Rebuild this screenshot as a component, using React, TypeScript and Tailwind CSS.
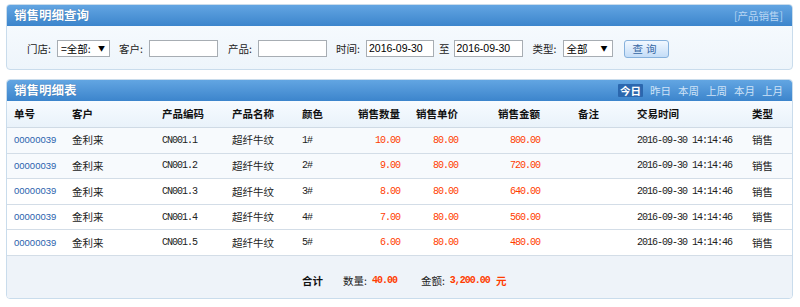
import React from "react";

const cn = '"Noto Sans CJK SC", "Liberation Sans", sans-serif';
const mono = '"Liberation Mono", "Noto Sans CJK SC", monospace';

const rows = [
  { code: "CN001.1", color: "1#", qty: "10.00", amount: "800.00" },
  { code: "CN001.2", color: "2#", qty: "9.00", amount: "720.00" },
  { code: "CN001.3", color: "3#", qty: "8.00", amount: "640.00" },
  { code: "CN001.4", color: "4#", qty: "7.00", amount: "560.00" },
  { code: "CN001.5", color: "5#", qty: "6.00", amount: "480.00" },
];

const cols = "grid grid-cols-[58px_90px_70px_70px_50px_62px_58px_82px_83px_115px_1fr]";
const num = "text-[10px] tracking-[-1px]";

function PanelHeader({ title, children }: { title: string; children?: React.ReactNode }) {
  return (
    <div className="flex h-[21px] items-center justify-between rounded-t-[3px] bg-gradient-to-b from-[#62a5e2] to-[#3c85cc] pl-[7px] pr-[9px]">
      <span className="text-[12.5px] font-bold leading-none text-white [text-shadow:0_0_1px_#2a5f99]" style={{ fontFamily: cn }}>
        {title}
      </span>
      {children}
    </div>
  );
}

function Field({ label, children }: { label: string; children: React.ReactNode }) {
  return (
    <div className="flex items-center">
      <span className="w-[30px] text-[10.5px] text-[#222]">{label}:</span>
      {children}
    </div>
  );
}

function TextBox({ w, value }: { w: string; value?: string }) {
  return (
    <div className={`${w} flex h-[17px] items-center border border-[#a7adb3] bg-white pl-[2px] text-[10.5px] text-black`} style={{ fontFamily: '"Liberation Sans", sans-serif' }}>
      {value}
    </div>
  );
}

function SelectBox({ w, value }: { w: string; value: string }) {
  return (
    <div className={`${w} flex h-[17px] items-center justify-between border border-[#a7adb3] bg-white pl-[3px] pr-[4px] text-[10.5px] text-black`}>
      <span>{value}</span>
      <span className="text-[7px]">▼</span>
    </div>
  );
}

export default function App() {
  const tabs = ["今日", "昨日", "本周", "上周", "本月", "上月"];
  return (
    <div className="flex h-[307px] w-[800px] flex-col gap-[9px] bg-white pl-[6px] pt-[4px]" style={{ fontFamily: cn }}>
      <div className="w-[787px] rounded-[4px] border border-[#c9dcec] bg-gradient-to-b from-[#f9fcff] to-[#eef5fb]">
        <PanelHeader title="销售明细查询">
          <span className="text-[10.5px] text-[#b9d6f3]">[产品销售]</span>
        </PanelHeader>
        <div className="flex h-[43px] items-center pl-[20px] pt-[2px]">
          <Field label="门店"><SelectBox w="w-[53px]" value="=全部:" /></Field>
          <div className="ml-[9px]"><Field label="客户"><TextBox w="w-[69px]" /></Field></div>
          <div className="ml-[10px]"><Field label="产品"><TextBox w="w-[69px]" /></Field></div>
          <div className="ml-[9px]"><Field label="时间"><TextBox w="w-[68px]" value="2016-09-30" /></Field></div>
          <span className="ml-[5px] mr-[4px] text-[10.5px] text-[#222]">至</span>
          <TextBox w="w-[69px]" value="2016-09-30" />
          <div className="ml-[10px]"><Field label="类型"><SelectBox w="w-[50px]" value="全部" /></Field></div>
          <button className="ml-[11px] flex h-[18px] w-[45px] items-center justify-center rounded-[3px] border border-[#86b1dc] bg-gradient-to-b from-[#f2f8ff] to-[#c4ddf7] text-[10.5px] tracking-[3px] text-[#3566a3]">
            查询
          </button>
        </div>
      </div>

      <div className="w-[787px] overflow-hidden rounded-[4px] border border-[#c9dcec] bg-white">
        <PanelHeader title="销售明细表">
          <div className="flex items-center gap-[7px] text-[10.5px]">
            {tabs.map((t, i) => (
              <span
                key={t}
                className={
                  i === 0
                    ? "rounded-[1px] bg-[#2b67ae] px-[2px] font-bold leading-[13px] text-white"
                    : "leading-[13px] text-[#cfe3f7]"
                }
              >
                {t}
              </span>
            ))}
          </div>
        </PanelHeader>
        <div className={`${cols} h-[27px] items-center border-b border-[#cfdae5] bg-gradient-to-b from-[#f7fbff] to-[#e9f2fa] text-[10.5px] font-bold text-[#111]`}>
          <span className="pl-[7px]">单号</span>
          <span className="pl-[7px]">客户</span>
          <span className="pl-[7px]">产品编码</span>
          <span className="pl-[7px]">产品名称</span>
          <span className="pl-[7px]">颜色</span>
          <span className="pr-[7px] text-right">销售数量</span>
          <span className="pr-[7px] text-right">销售单价</span>
          <span className="pr-[7px] text-right">销售金额</span>
          <span className="text-center">备注</span>
          <span className="pl-[7px]">交易时间</span>
          <span className="pl-[7px]">类型</span>
        </div>
        {rows.map((r, i) => (
          <div
            key={r.code}
            className={`${cols} h-[25.6px] items-center border-b border-[#d3dde7] text-[10.5px] text-[#222] ${i < 2 ? "bg-[#f7fafd]" : "bg-white"}`}
          >
            <span className="pl-[7px] text-[9.5px] text-[#2a62ad]" style={{ fontFamily: '"Liberation Sans", sans-serif' }}>00000039</span>
            <span className="pl-[7px]">金利来</span>
            <span className={`pl-[7px] ${num}`} style={{ fontFamily: mono }}>{r.code}</span>
            <span className="pl-[7px]">超纤牛纹</span>
            <span className={`pl-[7px] ${num}`} style={{ fontFamily: mono }}>{r.color}</span>
            <span className={`pr-[7px] text-right ${num} text-[#ff3c00]`} style={{ fontFamily: mono }}>{r.qty}</span>
            <span className={`pr-[7px] text-right ${num} text-[#ff3c00]`} style={{ fontFamily: mono }}>80.00</span>
            <span className={`pr-[7px] text-right ${num} text-[#ff3c00]`} style={{ fontFamily: mono }}>{r.amount}</span>
            <span />
            <span className={`pl-[7px] ${num}`} style={{ fontFamily: mono }}>2016-09-30 14:14:46</span>
            <span className="pl-[7px]">销售</span>
          </div>
        ))}
        <div className="flex h-[42px] items-center bg-[#eef3f9] pl-[295px] pt-[8px] text-[10.5px] text-[#222]">
          <span className="font-bold text-[#111]">合计</span>
          <span className="ml-[20px]">数量:</span>
          <span className={`ml-[5px] ${num} font-bold text-[#ff3c00]`} style={{ fontFamily: mono }}>40.00</span>
          <span className="ml-[24px]">金额:</span>
          <span className={`ml-[5px] ${num} font-bold text-[#ff3c00]`} style={{ fontFamily: mono }}>3,200.00</span>
          <span className="ml-[6px] font-bold text-[#ff3c00]">元</span>
        </div>
      </div>
    </div>
  );
}
